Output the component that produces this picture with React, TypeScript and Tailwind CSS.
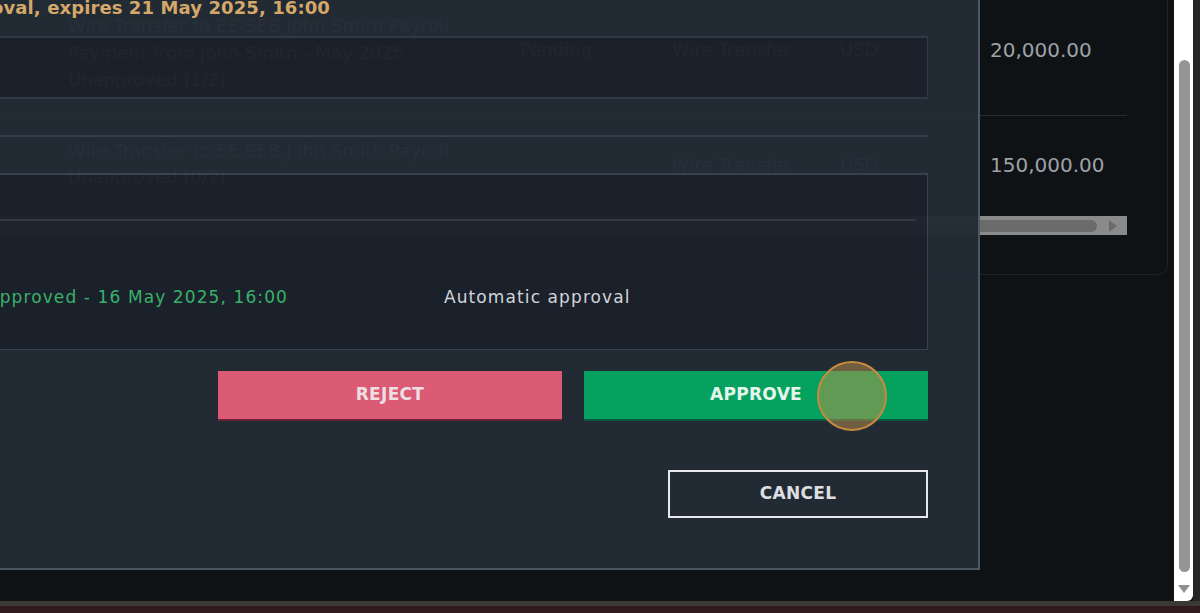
export default function App() {
  return (
    <div className="w-[1200px] h-[613px] overflow-hidden flex flex-col bg-[#0f1215] font-['DejaVu_Sans',sans-serif]">
      <div className="flex h-[601px]">
        <div className="relative w-[1174px] h-full bg-[#0f1215] overflow-hidden">
          {/* underlying page card */}
          <div className="w-[1168px] h-[275px] border-r border-b border-[#1e2328] rounded-br-[10px] pr-[40px] text-[#9da2a7] text-[18px]">
            <div className="flex h-[116px] border-b border-[#262b30] whitespace-nowrap">
              <div className="w-[520px] pl-[68px] pt-[12px] leading-[27px]">
                <div>Wire Transfer to EE-SEB John Smith Payroll</div>
                <div>Payment from John Smith - May 2025</div>
                <div>Unapproved (1/2)</div>
              </div>
              <div className="w-[152px] pt-[38px] leading-[24px]">Pending</div>
              <div className="w-[168px] pt-[38px] leading-[24px]">Wire Transfer</div>
              <div className="w-[150px] pt-[38px] leading-[24px]">USD</div>
              <div className="flex-1 pt-[38px] leading-[24px] text-[20px]">20,000.00</div>
            </div>
            <div className="flex h-[94px] whitespace-nowrap">
              <div className="w-[520px] pl-[68px] pt-[22px] leading-[26px]">
                <div>Wire Transfer to EE-SEB John Smith Payroll</div>
                <div>Unapproved (0/2)</div>
              </div>
              <div className="w-[152px] pt-[37px] leading-[24px]"></div>
              <div className="w-[168px] pt-[37px] leading-[24px]">Wire Transfer</div>
              <div className="w-[150px] pt-[37px] leading-[24px]">USD</div>
              <div className="flex-1 pt-[37px] leading-[24px] text-[20px]">150,000.00</div>
            </div>
            <div className="mt-[6px] h-[19px] bg-[#8a8a8a] flex items-center">
              <div className="ml-[300px] flex-1 h-[12px] rounded-full bg-[#6b6b6b]" />
              <div className="w-[30px] flex items-center justify-center">
                <svg width="9" height="12" viewBox="0 0 9 12">
                  <path d="M1 0 L9 6 L1 12 Z" fill="#6b6b6b" />
                </svg>
              </div>
            </div>
          </div>

          {/* modal */}
          <div className="absolute left-0 top-0 w-[980px] h-[570px] opacity-[0.965] bg-[#232b36] border-r-2 border-b-2 border-[#4f5963] pr-[50px] flex flex-col">
            <div className="h-[36px] flex">
              <div className="w-[330px] flex justify-end whitespace-nowrap">
                <span className="-mt-[3px] leading-[22px] text-[18px] font-bold tracking-[0.1px] text-[#dcae6d]">
                  Pending approval, expires 21 May 2025, 16:00
                </span>
              </div>
            </div>
            <div className="h-[63px] bg-[#1c222b] border-t-2 border-b-2 border-r border-[#323c47]" />
            <div className="h-[36px]" />
            <div className="h-[38px] border-t-2 border-[#38424d]" />
            <div className="h-[177px] bg-[#1c222b] border-t-2 border-r border-b border-[#3a4450] flex flex-col">
              <div className="h-[44px]" />
              <div className="h-[2px] bg-[#2e3741] mr-[11px]" />
              <div className="flex-1 flex items-center pt-[24px] whitespace-nowrap text-[17px] tracking-[1.1px] leading-[24px]">
                <div className="w-[288px] flex justify-end">
                  <span className="text-[#3ab86d]">Approved - 16 May 2025, 16:00</span>
                </div>
                <div className="ml-[156px] text-[#d8dce1]">Automatic approval</div>
              </div>
            </div>
            <div className="mt-[21px] flex justify-end gap-[22px]">
              <button className="w-[344px] h-[48px] bg-[#e35d78] shadow-[0_2px_0_#6e2637] text-[#f6e6ea] font-bold text-[17px] tracking-[0.3px]">
                REJECT
              </button>
              <button className="w-[344px] h-[48px] bg-[#04a861] shadow-[0_2px_0_#0b5a44] text-[#eefff5] font-bold text-[17px] tracking-[0.3px]">
                APPROVE
              </button>
            </div>
            <div className="mt-[51px] flex justify-end">
              <button className="w-[260px] h-[48px] border-2 border-[#eef1f4] text-[#e3e7ec] font-bold text-[17px] tracking-[0.3px]">
                CANCEL
              </button>
            </div>
          </div>

          {/* click indicator */}
          <div className="absolute left-[817px] top-[361px] w-[70px] h-[70px] rounded-full border-2 border-[#c98a3e] bg-[rgba(190,145,75,0.5)]" />
        </div>
        <div className="w-[19px] bg-white rounded-br-[6px] flex flex-col pt-[60px]">
          <div className="ml-[5px] w-[11px] h-[512px] rounded-full bg-[#959595]" />
          <div className="ml-[4px] mt-[13px]">
            <svg width="12" height="8" viewBox="0 0 12 8">
              <path d="M0 0 L12 0 L6 8 Z" fill="#8f8f8f" />
            </svg>
          </div>
        </div>
        <div className="w-[7px] bg-[#262626]" />
      </div>
      <div className="h-[5px] bg-[#3d3838]" />
      <div className="flex-1 bg-[#301a1d]" />
    </div>
  );
}
